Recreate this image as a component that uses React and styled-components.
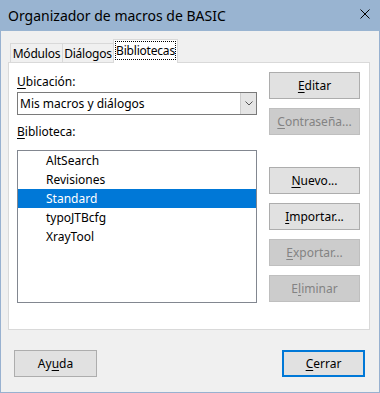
import React from 'react';
import styled, { createGlobalStyle } from 'styled-components';

const GlobalStyle = createGlobalStyle`
  html, body {
    margin: 0;
    padding: 0;
    background: #f0f0f0;
  }
  * {
    box-sizing: border-box;
  }
`;

const Window = styled.div`
  width: 380px;
  height: 393px;
  display: flex;
  flex-direction: column;
  background: #f0f0f0;
  border: 1px solid #98b1d0;
  border-top: none;
  font-family: "Noto Sans", "Segoe UI", sans-serif;
  font-size: 12px;
  color: #000;
`;

const TitleBar = styled.div`
  height: 31px;
  flex-shrink: 0;
  display: flex;
  align-items: center;
  justify-content: space-between;
  background: #99b4d1;
  padding: 0 10px 0 8px;
  margin: 0 -1px;
`;

const Title = styled.div`
  font-size: 14px;
  color: #000;
  padding-bottom: 1px;
`;

const CloseIcon = styled.svg`
  width: 10px;
  height: 10px;
  margin-top: -3px;
`;

const Body = styled.div`
  flex: 1;
  display: flex;
  flex-direction: column;
  padding: 8px 9px 0 7px;
`;

const TabStrip = styled.div`
  display: flex;
  align-items: flex-end;
  height: 24px;
  padding-left: 2px;
  margin-bottom: -1px;
  position: relative;
  z-index: 1;
`;

const Tab = styled.div`
  width: ${p => p.$width}px;
  height: ${p => (p.$active ? '24px' : '20px')};
  display: flex;
  justify-content: center;
  align-items: flex-start;
  padding-top: 2px;
  border: 1px solid #d9d9d9;
  border-bottom: ${p => (p.$active ? 'none' : '1px solid #d9d9d9')};
  border-left: ${p => (p.$first || p.$active ? '1px solid #d9d9d9' : 'none')};
  background: ${p => (p.$active ? '#ffffff' : '#f0f0f0')};
  margin-left: ${p => (p.$active ? '-1px' : '0')};
  line-height: 15px;
  white-space: nowrap;
  letter-spacing: -0.2px;
`;

const FocusLabel = styled.span`
  display: inline-block;
  outline: 1px dotted #000;
  line-height: 17px;
`;

const Panel = styled.div`
  height: 268px;
  background: #ffffff;
  border: 1px solid #d9d9d9;
  padding: 9px 7px 0 8px;
  display: flex;
  gap: 12px;
`;

const LeftColumn = styled.div`
  width: 240px;
  display: flex;
  flex-direction: column;
`;

const Label = styled.div`
  line-height: 16px;
  height: 16px;
  margin-top: ${p => p.$top || 0}px;
  margin-bottom: ${p => p.$bottom || 0}px;
`;

const Key = styled.u`
  text-decoration: underline;
  text-underline-offset: 2px;
`;

const Combo = styled.div`
  height: 23px;
  display: flex;
  align-items: stretch;
  border: 1px solid #7a7a7a;
  background: #fff;
`;

const ComboText = styled.div`
  flex: 1;
  padding-left: 2px;
  line-height: 21px;
`;

const ComboButton = styled.div`
  width: 16px;
  display: flex;
  align-items: center;
  justify-content: center;
  background: #e5e5e5;
  border-left: 1px solid #cccccc;
`;

const ListBox = styled.div`
  height: 153px;
  border: 1px solid #828790;
  background: #fff;
`;

const ListItem = styled.div`
  height: 19px;
  line-height: 19px;
  padding-left: 28px;
  background: ${p => (p.$selected ? '#0078d7' : 'transparent')};
  color: ${p => (p.$selected ? '#ffffff' : '#000000')};
`;

const RightColumn = styled.div`
  width: 91px;
  display: flex;
  flex-direction: column;
  gap: 9px;
`;

const Button = styled.div`
  height: 27px;
  width: ${p => p.$width || 91}px;
  display: flex;
  align-items: center;
  justify-content: center;
  background: ${p => (p.$disabled ? '#cccccc' : '#e1e1e1')};
  border: ${p => (p.$default ? '2px solid #0078d7' : p.$disabled ? '1px solid #bfbfbf' : '1px solid #adadad')};
  color: ${p => (p.$disabled ? '#838383' : '#000')};
  margin-top: ${p => p.$top || 0}px;
  padding-bottom: 1px;
`;

const Footer = styled.div`
  display: flex;
  justify-content: space-between;
  padding: 20px 5px 0 6px;
`;

const Chevron = () => (
  <svg width="8" height="5" viewBox="0 0 8 5">
    <polyline points="0.5,0.5 4,4 7.5,0.5" fill="none" stroke="#555" strokeWidth="1" />
  </svg>
);

const libraries = ['AltSearch', 'Revisiones', 'Standard', 'typoJTBcfg', 'XrayTool'];

export default function App() {
  return (
    <>
      <GlobalStyle />
      <Window>
        <TitleBar>
          <Title>Organizador de macros de BASIC</Title>
          <CloseIcon viewBox="0 0 10 10">
            <line x1="0.5" y1="0.5" x2="9.5" y2="9.5" stroke="#000" strokeWidth="1" />
            <line x1="9.5" y1="0.5" x2="0.5" y2="9.5" stroke="#000" strokeWidth="1" />
          </CloseIcon>
        </TitleBar>
        <Body>
          <TabStrip>
            <Tab $first $width={53}>Módulos</Tab>
            <Tab $width={51}>Diálogos</Tab>
            <Tab $active $width={65}>
              <FocusLabel>Bibliotecas</FocusLabel>
            </Tab>
          </TabStrip>
          <Panel>
            <LeftColumn>
              <Label $top={2} $bottom={2}><Key>U</Key>bicación:</Label>
              <Combo>
                <ComboText>Mis macros y diálogos</ComboText>
                <ComboButton><Chevron /></ComboButton>
              </Combo>
              <Label $top={9} $bottom={10}><Key>B</Key>iblioteca:</Label>
              <ListBox>
                {libraries.map(name => (
                  <ListItem key={name} $selected={name === 'Standard'}>{name}</ListItem>
                ))}
              </ListBox>
            </LeftColumn>
            <RightColumn>
              <Button><Key>E</Key>ditar</Button>
              <Button $disabled><Key>C</Key>ontraseña...</Button>
              <Button $top={23}><Key>N</Key>uevo...</Button>
              <Button><Key>I</Key>mportar...</Button>
              <Button $disabled><Key>E</Key>xportar...</Button>
              <Button $disabled>E<Key>l</Key>iminar</Button>
            </RightColumn>
          </Panel>
          <Footer>
            <Button $width={83}>Ay<Key>u</Key>da</Button>
            <Button $width={83} $default><Key>C</Key>errar</Button>
          </Footer>
        </Body>
      </Window>
    </>
  );
}
